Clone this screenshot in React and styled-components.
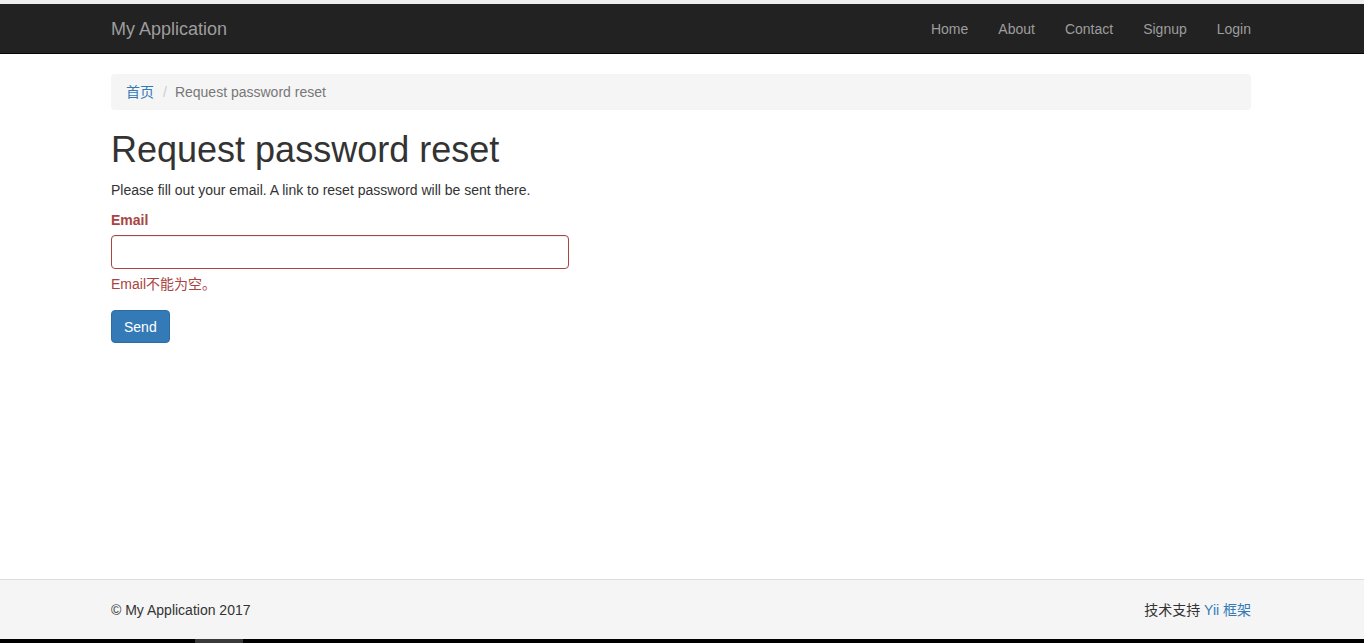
import styled, { createGlobalStyle } from "styled-components";

const GlobalStyle = createGlobalStyle`
  html, body {
    margin: 0;
    padding: 0;
    height: 100%;
  }
  body {
    font-family: "Liberation Sans", Arial, "Noto Sans CJK SC", sans-serif;
    font-size: 14px;
    line-height: 1.42857;
    color: #333;
    background: #fff;
  }
  #root {
    height: 100%;
  }
  * {
    box-sizing: border-box;
  }
`;

const Page = styled.div`
  min-height: 100vh;
  display: flex;
  flex-direction: column;
`;

const TopStrip = styled.div`
  height: 4px;
  background: #efefef;
`;

const Navbar = styled.nav`
  height: 50px;
  background: #222;
  border-bottom: 1px solid #080808;
`;

const Container = styled.div`
  width: 1170px;
  margin: 0 auto;
  padding: 0 16px 0 14px;
`;

const NavInner = styled(Container)`
  height: 100%;
  display: flex;
  align-items: center;
  justify-content: space-between;
`;

const Brand = styled.a`
  font-size: 18px;
  line-height: 20px;
  color: #9d9d9d;
  text-decoration: none;
`;

const NavList = styled.ul`
  display: flex;
  list-style: none;
  margin: 0 -15px 0 0;
  padding: 0;
`;

const NavLink = styled.a`
  display: block;
  padding: 15px;
  line-height: 20px;
  color: #9d9d9d;
  text-decoration: none;
`;

const Main = styled.main`
  flex: 1;
  padding-top: 20px;
`;

const Breadcrumb = styled.ol`
  list-style: none;
  margin: 0 0 20px;
  padding: 9px 15px 7px;
  background: #f5f5f5;
  border-radius: 4px;
  display: flex;
`;

const Crumb = styled.li`
  color: ${(p) => (p.$active ? "#777" : "#337ab7")};
  &:not(:first-child)::before {
    content: "/";
    padding: 0 8px 0 9px;
    color: #ccc;
  }
`;

const CrumbLink = styled.a`
  color: #337ab7;
  text-decoration: none;
`;

const Title = styled.h1`
  font-size: 36px;
  font-weight: 500;
  line-height: 1.1;
  margin: 20px 0 10px;
  color: #333;
`;

const Lead = styled.p`
  margin: 0 0 10px;
  padding-top: 1px;
`;

const Form = styled.form`
  width: 458px;
`;

const FormGroup = styled.div`
  margin-bottom: 15px;
`;

const Label = styled.label`
  display: block;
  font-weight: bold;
  margin-bottom: 4px;
  color: ${(p) => (p.$error ? "#a94442" : "#333")};
`;

const Input = styled.input`
  display: block;
  width: 100%;
  height: 34px;
  padding: 6px 12px;
  font-size: 14px;
  font-family: inherit;
  border: 1px solid ${(p) => (p.$error ? "#a94442" : "#ccc")};
  border-radius: 4px;
  box-shadow: inset 0 1px 1px rgba(0, 0, 0, 0.075);
  outline: none;
`;

const HelpBlock = styled.div`
  margin: 6px 0 10px;
  color: #a94442;
`;

const Button = styled.button`
  height: 33px;
  padding: 6px 12px;
  font-size: 14px;
  font-family: inherit;
  line-height: 20px;
  color: #fff;
  background: #337ab7;
  border: 1px solid #2e6da4;
  border-radius: 4px;
`;

const Footer = styled.footer`
  height: 60px;
  background: #f5f5f5;
  border-top: 1px solid #ddd;
`;

const FooterInner = styled(Container)`
  height: 100%;
  display: flex;
  align-items: center;
  justify-content: space-between;
  padding-top: 3px;
`;

const FooterLink = styled.a`
  color: #337ab7;
  text-decoration: none;
`;

const BottomBar = styled.div`
  height: 4px;
  background: #000;
  display: flex;
`;

const BarSegment = styled.div`
  width: 48px;
  margin-left: 195px;
  background: #3a3a3a;
`;

export default function App() {
  return (
    <Page>
      <GlobalStyle />
      <TopStrip />
      <Navbar>
        <NavInner>
          <Brand href="#">My Application</Brand>
          <NavList>
            {["Home", "About", "Contact", "Signup", "Login"].map((item) => (
              <li key={item}>
                <NavLink href="#">{item}</NavLink>
              </li>
            ))}
          </NavList>
        </NavInner>
      </Navbar>

      <Main>
        <Container>
          <Breadcrumb>
            <Crumb>
              <CrumbLink href="#">首页</CrumbLink>
            </Crumb>
            <Crumb $active>Request password reset</Crumb>
          </Breadcrumb>

          <Title>Request password reset</Title>
          <Lead>Please fill out your email. A link to reset password will be sent there.</Lead>

          <Form onSubmit={(e) => e.preventDefault()}>
            <FormGroup>
              <Label $error htmlFor="email">Email</Label>
              <Input $error id="email" type="text" />
              <HelpBlock>Email不能为空。</HelpBlock>
            </FormGroup>
            <Button type="submit">Send</Button>
          </Form>
        </Container>
      </Main>

      <Footer>
        <FooterInner>
          <span>© My Application 2017</span>
          <span>
            技术支持 <FooterLink href="#">Yii 框架</FooterLink>
          </span>
        </FooterInner>
      </Footer>
      <BottomBar>
        <BarSegment />
      </BottomBar>
    </Page>
  );
}
